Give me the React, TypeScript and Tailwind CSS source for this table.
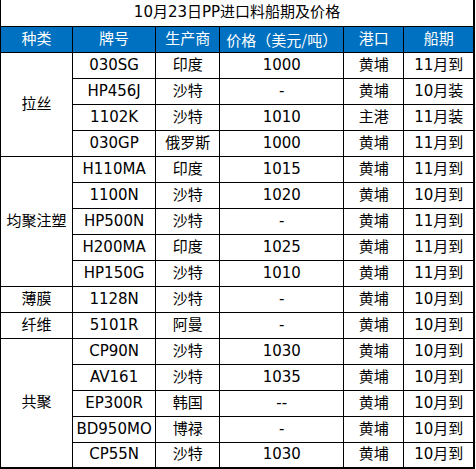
type Row = [string, string, string, string, string];

const groups: { name: string; rows: Row[] }[] = [
  {
    name: "拉丝",
    rows: [
      ["030SG", "印度", "1000", "黄埔", "11月到"],
      ["HP456J", "沙特", "-", "黄埔", "10月装"],
      ["1102K", "沙特", "1010", "主港", "11月装"],
      ["030GP", "俄罗斯", "1000", "黄埔", "11月到"],
    ],
  },
  {
    name: "均聚注塑",
    rows: [
      ["H110MA", "印度", "1015", "黄埔", "11月到"],
      ["1100N", "沙特", "1020", "黄埔", "10月到"],
      ["HP500N", "沙特", "-", "黄埔", "11月到"],
      ["H200MA", "印度", "1025", "黄埔", "11月到"],
      ["HP150G", "沙特", "1010", "黄埔", "11月到"],
    ],
  },
  { name: "薄膜", rows: [["1128N", "沙特", "-", "黄埔", "10月到"]] },
  { name: "纤维", rows: [["5101R", "阿曼", "-", "黄埔", "10月到"]] },
  {
    name: "共聚",
    rows: [
      ["CP90N", "沙特", "1030", "黄埔", "10月到"],
      ["AV161", "沙特", "1035", "黄埔", "10月到"],
      ["EP300R", "韩国", "--", "黄埔", "10月到"],
      ["BD950MO", "博禄", "-", "黄埔", "10月到"],
      ["CP55N", "沙特", "1030", "黄埔", "10月到"],
    ],
  },
];

const headers = ["种类", "牌号", "生产商", "价格（美元/吨）", "港口", "船期"];

export default function App() {
  return (
    <div className="w-[476px] h-[469px] bg-white overflow-hidden">
      <table
        className="table-fixed border-collapse text-[15px] leading-none text-black font-['DejaVu_Sans','Noto_Sans_CJK_SC',sans-serif]"
        style={{ width: 475 }}
      >
        <colgroup>
          <col className="w-[72px]" />
          <col className="w-[83px]" />
          <col className="w-[64px]" />
          <col className="w-[124px]" />
          <col className="w-[60px]" />
          <col className="w-[70px]" />
        </colgroup>
        <tbody>
          <tr className="h-[26px]">
            <td colSpan={6} className="border-l border-r-2 border-black text-center p-0">
              10月23日PP进口料船期及价格
            </td>
          </tr>
          <tr className="h-[26px] bg-[#0070c0] text-white">
            {headers.map((h, i) => (
              <td
                key={h}
                className={`border border-black text-center p-0 whitespace-nowrap ${i === 5 ? "border-r-2" : ""} ${i === 3 ? "font-['Noto_Sans_CJK_SC',sans-serif]" : ""}`}
              >
                {h}
              </td>
            ))}
          </tr>
          {groups.map((g, gi) =>
            g.rows.map((r, ri) => {
              const last = gi === groups.length - 1 && ri === g.rows.length - 1;
              return (
                <tr key={g.name + ri} className="h-[26px]">
                  {ri === 0 && (
                    <td
                      rowSpan={g.rows.length}
                      className={`border border-black text-center p-0 ${gi === groups.length - 1 ? "border-b-2" : ""}`}
                    >
                      {g.name}
                    </td>
                  )}
                  {r.map((c, ci) => (
                    <td
                      key={ci}
                      className={`border border-black text-center p-0 whitespace-nowrap ${ci === 4 ? "border-r-2" : ""} ${last ? "border-b-2" : ""}`}
                    >
                      {c}
                    </td>
                  ))}
                </tr>
              );
            })
          )}
        </tbody>
      </table>
    </div>
  );
}
